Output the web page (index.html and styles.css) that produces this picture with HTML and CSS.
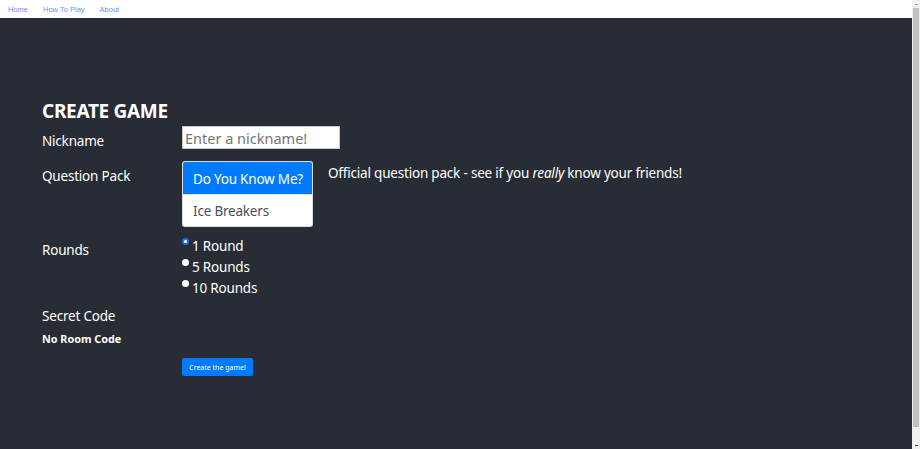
FILE: index.html
```html
<!DOCTYPE html>
<html>
<head>
<meta charset="utf-8">
<link rel="stylesheet" href="styles.css">
</head>
<body>
<div class="page">
  <nav class="nav">
    <a class="nav-link">Home</a>
    <a class="nav-link">How To Play</a>
    <a class="nav-link">About</a>
  </nav>
  <main class="main">
    <h1 class="title">CREATE GAME</h1>
    <div class="row row-nick">
      <label class="label label-nick">Nickname</label>
      <input class="input" type="text" placeholder="Enter a nickname!">
    </div>

    <div class="row row-pack">
      <label class="label label-pack">Question Pack</label>
      <div class="list">
        <div class="list-item active">Do You Know Me?</div>
        <div class="list-item">Ice Breakers</div>
      </div>
      <p class="pack-desc">Official question pack - see if you <em>really</em> know your friends!</p>
    </div>

    <div class="row row-rounds">
      <label class="label label-rounds">Rounds</label>
      <div class="rounds">
        <div class="radio-row"><span class="radio checked"></span>1 Round</div>
        <div class="radio-row"><span class="radio"></span>5 Rounds</div>
        <div class="radio-row"><span class="radio"></span>10 Rounds</div>
      </div>
    </div>

    <div class="row row-secret">
      <label class="label">Secret Code</label>
    </div>

    <div class="code">No Room Code</div>

    <div class="row row-btn">
      <div class="spacer"></div>
      <button class="btn">Create the game!</button>
    </div>
  </main>
</div>
<div class="scrollbar">
  <div class="sb-arrow sb-up"></div>
  <div class="sb-thumb"></div>
  <div class="sb-arrow sb-down"></div>
</div>
</body>
</html>
```

FILE: styles.css
```css
html, body {
  margin: 0;
  padding: 0;
  height: 449px;
  overflow: hidden;
}
body {
  display: flex;
  font-family: "Noto Sans", "Open Sans", sans-serif;
  background: #282c34;
}
.page {
  flex: 1;
  display: flex;
  flex-direction: column;
  min-width: 0;
}
.nav {
  height: 18px;
  background: #ffffff;
  display: flex;
  align-items: center;
  padding-left: 8px;
}
.nav-link {
  font-size: 7.5px;
  color: #6f8cff;
  margin-right: 15px;
  font-family: "Liberation Sans", sans-serif;
}
.main {
  flex: 1;
  background: #282c34;
  padding: 81px 0 0 42px;
  color: #ffffff;
}
.title {
  margin: 0;
  font-size: 19px;
  line-height: 24px;
  font-weight: 700;
  letter-spacing: -0.3px;
}
.row {
  display: flex;
  align-items: flex-start;
}
.label, .spacer {
  width: 140px;
  flex: none;
}
.label {
  font-size: 13.5px;
  letter-spacing: -0.2px;
  line-height: 20px;
}
.row-nick { margin-top: 3px; }
.label-nick { padding-top: 5px; }
.row-pack { margin-top: 10px; }
.label-pack { padding-top: 5px; }
.row-rounds { margin-top: 7px; }
.label-rounds { padding-top: 6px; }
.row-secret { margin-top: 7px; }
.row-btn { margin-top: 12px; }

.input {
  box-sizing: border-box;
  width: 158px;
  height: 23px;
  border: 1px solid #c8c8c8;
  padding: 0 2px;
  font-family: inherit;
  font-size: 14.5px;
  color: #495057;
  background: #fff;
  outline: none;
  margin: 0;
}
.input::placeholder { color: #757575; }
.list {
  width: 131px;
  border-radius: 3px;
  overflow: hidden;
  background: #fff;
  border: 1px solid rgba(0,0,0,0.125);
  box-sizing: border-box;
  flex: none;
}
.list-item {
  height: 32px;
  box-sizing: border-box;
  padding: 1px 6px 0 10px;
  display: flex;
  align-items: center;
  font-size: 13.5px;
  letter-spacing: -0.2px;
  color: #495057;
  white-space: nowrap;
}
.list-item + .list-item { border-top: 1px solid rgba(0,0,0,0.125); }
.list-item.active {
  background: #007bff;
  color: #fff;
}
.pack-desc {
  margin: 2px 0 0 15px;
  font-size: 13.5px;
  letter-spacing: -0.2px;
  line-height: 20px;
  white-space: nowrap;
}
.rounds {
  display: flex;
  flex-direction: column;
  margin-top: 2px;
}
.radio-row {
  font-size: 13.5px;
  letter-spacing: -0.2px;
  line-height: 21px;
  display: flex;
  align-items: flex-start;
}
.radio {
  width: 7px;
  height: 7px;
  border-radius: 50%;
  background: #fff;
  margin: 2px 3px 0 0;
  box-sizing: border-box;
  flex: none;
}
.radio.checked {
  border: 2px solid #1a73e8;
}
.code {
  font-size: 10.8px;
  font-weight: 700;
  line-height: 14px;
  margin-top: 6px;
}
.btn {
  height: 18px;
  width: 71px;
  padding: 0;
  border: none;
  border-radius: 2px;
  background: #007bff;
  color: #fff;
  font-family: inherit;
  font-size: 7px;
}
.scrollbar {
  width: 8px;
  background: #f0f0f0;
  display: flex;
  flex-direction: column;
  align-items: center;
}
.sb-arrow {
  height: 8px;
  width: 8px;
  display: flex;
  align-items: center;
  justify-content: center;
}
.sb-up::after, .sb-down::after {
  content: "";
  width: 3px;
  height: 1px;
  background: #a3a3a3;
}
.sb-down::after { background: #505050; }
.sb-thumb {
  width: 6px;
  flex: 1;
  background: #c1c1c1;
  margin-bottom: 14px;
}
```
